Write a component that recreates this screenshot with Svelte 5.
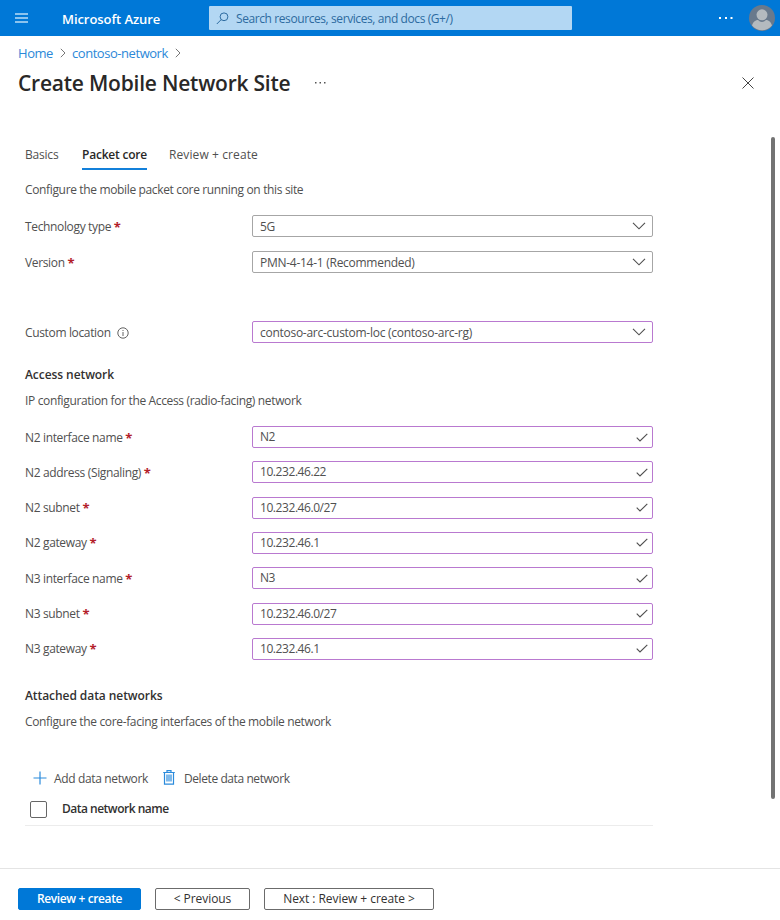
<script>
  const general = [
    { label: 'Technology type', value: '5G' },
    { label: 'Version', value: 'PMN-4-14-1 (Recommended)' },
  ];
  const access = [
    { label: 'N2 interface name', value: 'N2' },
    { label: 'N2 address (Signaling)', value: '10.232.46.22' },
    { label: 'N2 subnet', value: '10.232.46.0/27' },
    { label: 'N2 gateway', value: '10.232.46.1' },
    { label: 'N3 interface name', value: 'N3' },
    { label: 'N3 subnet', value: '10.232.46.0/27' },
    { label: 'N3 gateway', value: '10.232.46.1' },
  ];
</script>

{#snippet chevron()}
  <svg class="chevron" width="14" height="10" viewBox="0 0 14 10"><path d="M1 1.8 7 7.8 13 1.8" /></svg>
{/snippet}

{#snippet crumbArrow()}
  <svg class="crumb-arrow" width="6" height="10" viewBox="0 0 6 10"><path d="M.8 .8 5 5 .8 9.2" /></svg>
{/snippet}

<div class="page">
  <header>
    <svg class="menu" width="14" height="12" viewBox="0 0 14 12"><path d="M0 2h13M0 6h13M0 10h13" /></svg>
    <span class="brand">Microsoft Azure</span>
    <div class="search">
      <svg width="13" height="13" viewBox="0 0 13 13"><circle cx="8" cy="4.8" r="3.9" /><path d="M5.2 7.6.8 12" /></svg>
      <span>Search resources, services, and docs (G+/)</span>
    </div>
    <svg class="more" width="14" height="4" viewBox="0 0 14 4"><path d="M0 1h2v2H0zM6 1h2v2H6zM11.5 1h2v2h-2z" /></svg>
    <svg class="avatar" width="26" height="26" viewBox="0 0 26 26">
      <circle cx="13" cy="13" r="13" fill="#69798c" />
      <path d="M3 20.6C4 16.6 7 15 9 15c2.500 2.500 5.500 2.500 8 0 2 0 5 1.600 6 5.600A13 13 0 0 1 3 20.600Z" fill="#b4babf" />
      <circle cx="13" cy="9.800" r="5.500" fill="#b4babf" />
    </svg>
  </header>

  <nav>
    <a href="#home">Home</a>
    {@render crumbArrow()}
    <a class="network" href="#network">contoso-network</a>
    {@render crumbArrow()}
  </nav>

  <div class="heading">
    <h1>Create Mobile Network Site</h1>
    <svg class="dots" width="11" height="2" viewBox="0 0 11 2"><path d="M0 0h1.500v1.500H0zM4.500 0H6v1.500H4.500zM9 0h1.500v1.500H9z" /></svg>
    <svg class="close" width="12" height="12" viewBox="0 0 12 12"><path d="m.5.5 11 11m0-11-11 11" /></svg>
  </div>

  <main>
    <div class="content">
      <div class="tabs">
        <span class="tab basics">Basics</span>
        <span class="tab active">Packet core</span>
        <span class="tab review">Review + create</span>
      </div>
      <p class="intro">Configure the mobile packet core running on this site</p>

      <div class="rows general">
        {#each general as row}
          <div class="row">
            <span class="label">{row.label} <b>*</b></span>
            <div class="field"><span>{row.value}</span>{@render chevron()}</div>
          </div>
        {/each}
      </div>

      <div class="row location">
        <span class="label">Custom location
          <svg class="info" width="12" height="12" viewBox="0 0 12 12"><circle cx="6" cy="6" r="5.200" /><path d="M6 5v4M6 3v1" /></svg>
        </span>
        <div class="field changed"><span>contoso-arc-custom-loc (contoso-arc-rg)</span>{@render chevron()}</div>
      </div>

      <h2>Access network</h2>
      <p class="access-note">IP configuration for the Access (radio-facing) network</p>

      <div class="rows access">
        {#each access as row}
          <div class="row">
            <span class="label">{row.label} <b>*</b></span>
            <div class="field changed">
              <span class="entry">{row.value}</span>
              <svg class="check" width="12" height="9" viewBox="0 0 12 9"><path d="M.7 4.700 4 8 11.300.8" /></svg>
            </div>
          </div>
        {/each}
      </div>

      <h2 class="attached">Attached data networks</h2>
      <p class="attached-note">Configure the core-facing interfaces of the mobile network</p>

      <div class="toolbar">
        <svg class="plus" width="14" height="14" viewBox="0 0 14 14"><path d="M7 .5v13M.5 7h13" /></svg>
        <span class="add">Add data network</span>
        <svg class="trash" width="12" height="15" viewBox="0 0 12 15">
          <path d="M.2 2.500h11.600M4 2.300V.7h4v1.600M1.500 2.500v11.600h9V2.500" />
          <path class="bars" d="M4 4.500v7M6 4.500v7M8 4.500v7" />
        </svg>
        <span class="delete">Delete data network</span>
      </div>

      <div class="table-head">
        <span class="checkbox"></span>
        <span>Data network name</span>
      </div>
    </div>
    <div class="scrollbar"></div>
  </main>

  <footer>
    <button class="primary">Review + create</button>
    <button class="previous">&lt; Previous</button>
    <button class="next">Next : Review + create &gt;</button>
  </footer>
</div>

<style>
  :global(body) {
    margin: 0;
    background: #fff;
  }
  .page {
    width: 780px;
    height: 920px;
    display: flex;
    flex-direction: column;
    overflow: hidden;
    color: #505050;
    font: 12px/18px 'Open Sans', 'Noto Sans', sans-serif;
    letter-spacing: -0.35px;
    white-space: nowrap;
  }
  svg {
    flex: none;
    fill: none;
    stroke: currentColor;
  }
  p, h1, h2 {
    margin: 0;
  }
  header {
    flex: none;
    box-sizing: border-box;
    height: 36px;
    display: flex;
    align-items: center;
    padding: 0 5px 0 15px;
    background: #0078d7;
    color: #fff;
  }
  .menu {
    color: #b9dcf6;
    stroke-width: 1.3;
  }
  .brand {
    width: 147px;
    margin-left: 33px;
    font-size: 13px;
    font-weight: 600;
    letter-spacing: -0.07px;
    padding-top: 2px;
  }
  .search {
    box-sizing: border-box;
    width: 363px;
    height: 24px;
    display: flex;
    align-items: center;
    gap: 7px;
    padding-left: 7px;
    border-radius: 1px;
    background: #b3d7f3;
    color: #2d6ba0;
    letter-spacing: -0.41px;
  }
  .search span {
    padding-top: 1px;
  }
  .more {
    margin-left: 147px;
    fill: #fff;
    stroke: none;
  }
  .avatar {
    margin-left: 16px;
    stroke: none;
  }
  nav {
    height: 33px;
    display: flex;
    align-items: center;
    padding-left: 18px;
  }
  nav a {
    width: 42px;
    font-size: 13px;
    letter-spacing: -0.45px;
    color: #2b88d8;
    text-decoration: none;
  }
  nav .network {
    width: 103px;
    margin-left: 6px;
  }
  .crumb-arrow {
    color: #777;
  }
  .heading {
    height: 28px;
    display: flex;
    align-items: center;
    padding: 0 26px 0 18px;
  }
  h1 {
    width: 297px;
    font-size: 21px;
    line-height: 28px;
    font-weight: 600;
    letter-spacing: -0.22px;
    color: #292827;
  }
  .dots {
    fill: #555;
    stroke: none;
  }
  .close {
    margin-left: auto;
    color: #444;
  }
  main {
    height: 772px;
    box-sizing: border-box;
    display: flex;
    padding: 40px 5px 0 25px;
    border-bottom: 1px solid #e4e4e4;
  }
  .content {
    width: 628px;
  }
  .scrollbar {
    width: 4px;
    height: 662px;
    margin-left: auto;
    border-radius: 2px;
    background: #737373;
  }
  .tabs {
    height: 33px;
    display: flex;
    box-sizing: border-box;
    padding-top: 9px;
    margin-bottom: 11px;
  }
  .tab {
    height: 22px;
    letter-spacing: -0.2px;
  }
  .basics {
    width: 57px;
  }
  .active {
    width: 65px;
    margin-right: 22px;
    border-bottom: 2px solid #1380da;
    color: #292827;
    font-weight: 600;
    letter-spacing: -0.22px;
  }
  .review {
    letter-spacing: 0.1px;
  }
  .rows {
    display: flex;
    flex-direction: column;
    justify-content: space-between;
  }
  .general {
    height: 58px;
    margin-top: 16px;
  }
  .row {
    height: 22px;
    display: flex;
    align-items: center;
  }
  .label {
    width: 227px;
    padding-top: 1px;
  }
  .label b {
    color: #b3202a;
    font-size: 13px;
    line-height: 12px;
    vertical-align: -1px;
  }
  .info {
    margin-left: 4px;
    vertical-align: -2px;
  }
  .info path, .info circle {
    stroke-width: 0.9;
  }
  .field {
    flex: 1;
    box-sizing: border-box;
    height: 22px;
    display: flex;
    align-items: center;
    justify-content: space-between;
    padding: 0 6px 0 7px;
    border: 1px solid #a6a6a6;
    border-radius: 2px;
    letter-spacing: -0.27px;
  }
  .general .field span, .location .field span {
    padding-top: 1px;
  }
  .field .entry {
    letter-spacing: -0.43px;
  }
  .changed {
    border-color: #b979d0;
  }
  .chevron {
    stroke-width: 1.15;
  }
  .check {
    margin-right: -2px;
    stroke-width: 1.15;
  }
  .location {
    margin-top: 48px;
  }
  h2 {
    margin-top: 23px;
    font-size: 12px;
    line-height: 18px;
    font-weight: 600;
    letter-spacing: -0.07px;
    color: #323130;
  }
  .access-note {
    margin-top: 8px;
  }
  .access {
    height: 234px;
    margin-top: 16px;
  }
  .attached {
    margin-top: 27px;
  }
  .attached-note {
    margin-top: 8px;
  }
  .toolbar {
    height: 20px;
    display: flex;
    align-items: center;
    margin-top: 37px;
    padding-left: 8px;
  }
  .plus, .trash {
    color: #2b8bdc;
  }
  .trash {
    margin-bottom: 2px;
    stroke-width: 1.2;
  }
  .plus {
    stroke-width: 1.2;
  }
  .add {
    width: 109px;
    margin-left: 7px;
  }
  .delete {
    margin-left: 9px;
    letter-spacing: -0.42px;
  }
  .add, .delete {
    padding-top: 1px;
  }
  .table-head {
    box-sizing: border-box;
    height: 38px;
    display: flex;
    align-items: center;
    gap: 14px;
    padding: 5px 0 0 5px;
    border-bottom: 1px solid #ececec;
    color: #323130;
    font-weight: 600;
    letter-spacing: -0.5px;
  }
  .checkbox {
    box-sizing: border-box;
    width: 17px;
    height: 17px;
    margin-right: 1px;
    border: 1px solid #666;
    border-radius: 2px;
  }
  footer {
    height: 51px;
    display: flex;
    box-sizing: border-box;
    gap: 14px;
    padding: 19px 0 0 18px;
  }
  button {
    box-sizing: border-box;
    height: 22px;
    padding: 0;
    border: 1px solid #6b6b6b;
    border-radius: 2px;
    background: #fff;
    color: #323130;
    font: 12px/18px 'Open Sans', 'Noto Sans', sans-serif;
    letter-spacing: -0.06px;
  }
  .primary {
    width: 123px;
    border-color: #0078d7;
    background: #0078d7;
    color: #fff;
    font-weight: 600;
    letter-spacing: -0.38px;
  }
  .previous {
    width: 95px;
  }
  .next {
    width: 170px;
  }
</style>
